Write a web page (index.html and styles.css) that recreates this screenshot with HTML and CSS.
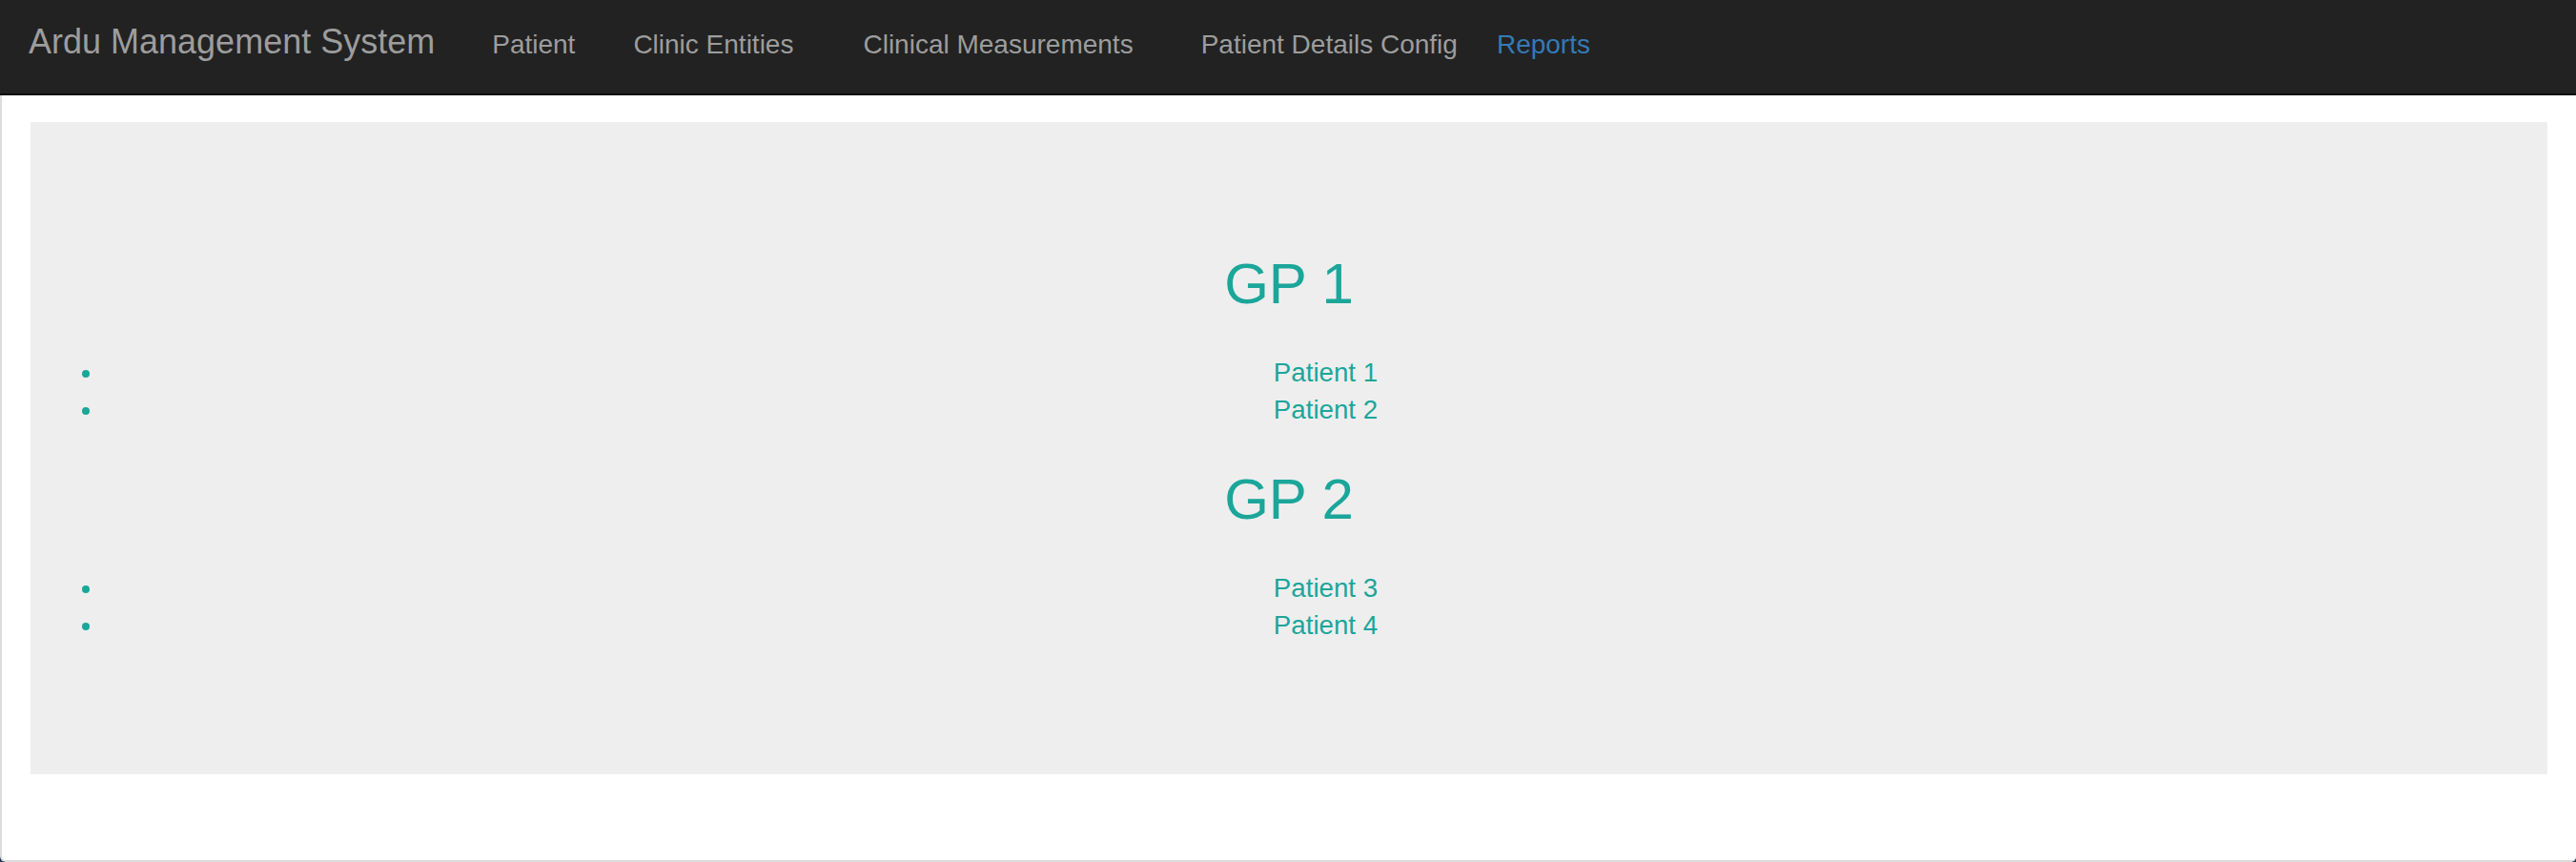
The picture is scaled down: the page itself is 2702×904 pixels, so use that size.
FILE: index.html
```html
<!DOCTYPE html>
<html lang="en">
<head>
    <meta charset="UTF-8">
    <meta name="viewport" content="width=device-width, initial-scale=1.0">
    <title>Ardu Management System - Reports</title>
    <link rel="stylesheet" href="styles.css">
</head>
<body>
    <nav class="navbar">
        <a class="brand" href="#">Ardu Management System</a>
        <ul class="nav-links">
            <li><a href="#">Patient</a></li>
            <li><a href="#">Clinic Entities</a></li>
            <li><a href="#">Clinical Measurements</a></li>
            <li><a href="#">Patient Details Config</a></li>
            <li><a class="active" href="#">Reports</a></li>
        </ul>
    </nav>
    <main class="page">
        <section class="jumbotron">
            <div class="group">
                <h2>GP 1</h2>
                <ul class="patients">
                    <li><a href="#">Patient 1</a></li>
                    <li><a href="#">Patient 2</a></li>
                </ul>
            </div>
            <div class="group">
                <h2>GP 2</h2>
                <ul class="patients">
                    <li><a href="#">Patient 3</a></li>
                    <li><a href="#">Patient 4</a></li>
                </ul>
            </div>
        </section>
    </main>
</body>
</html>
```

FILE: styles.css
```css
/* Reset */
* {
    margin: 0;
    padding: 0;
    box-sizing: border-box;
}

html {
    background: #1c3550;
}

body {
    font-family: 'Liberation Sans', Arial, sans-serif;
    color: #333;
    width: 2702px;
    height: 904px;
    overflow: hidden;
}

a {
    text-decoration: none;
}

/* Barra de navegação */
.navbar {
    display: flex;
    align-items: flex-start;
    height: 100px;
    background: #222;
    border-bottom: 2px solid #080808;
}

.brand {
    color: #9d9d9d;
    font-size: 36px;
    line-height: 39px;
    padding: 24px 0 0 30px;
}

.nav-links {
    display: flex;
    list-style: none;
}

.nav-links a {
    display: block;
    color: #9d9d9d;
    font-size: 28px;
    line-height: 39px;
    padding-top: 27px;
}

.nav-links a.active {
    color: #337ab7;
}

.nav-links li:nth-child(1) { margin-left: 60px; }
.nav-links li:nth-child(2) { margin-left: 61px; }
.nav-links li:nth-child(3) { margin-left: 73px; }
.nav-links li:nth-child(4) { margin-left: 71px; }
.nav-links li:nth-child(5) { margin-left: 41px; }

/* Conteúdo */
.page {
    height: 804px;
    background: #fff;
    border-left: 2px solid #dcdcdc;
    border-bottom: 2px solid #dcdcdc;
    border-radius: 0 0 5px 6px;
    padding: 28px 30px 0 30px;
}

.jumbotron {
    background: #eeeeee;
    padding: 137px 0 137px;
    color: #1ba69a;
}

.group + .group {
    margin-top: 41px;
}

.group h2 {
    font-size: 60px;
    font-weight: normal;
    line-height: 66px;
    text-align: center;
    margin-bottom: 40px;
}

.patients {
    padding-left: 77px;
    font-size: 27.7px;
    line-height: 39.3px;
}

.patients li {
    text-align: center;
}

.patients a {
    color: #1ba69a;
}
```
